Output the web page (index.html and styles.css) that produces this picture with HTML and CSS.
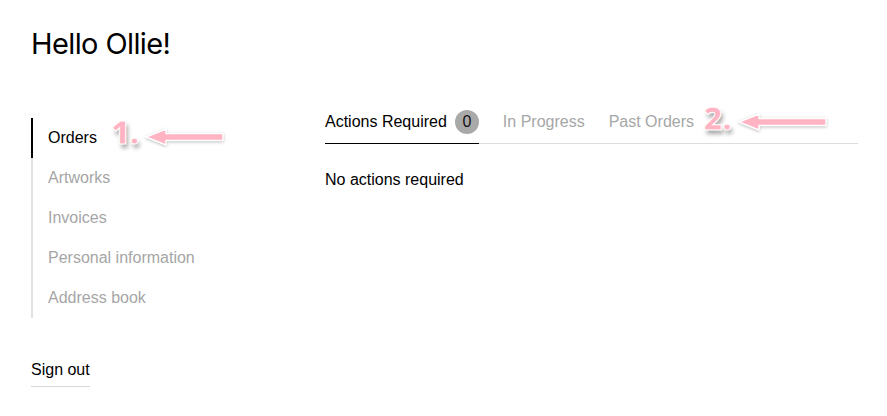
FILE: index.html
```html
<!DOCTYPE html>
<html>
<head>
<meta charset="utf-8">
<link rel="stylesheet" href="styles.css">
</head>
<body>
<div class="page">
  <h1 class="title">Hello Ollie!</h1>
  <div class="main">
    <aside class="side">
      <ul class="nav">
        <li class="nav-item active">Orders<span class="note note-1">1.</span>
          <svg class="arrow arrow-1" width="82" height="20" viewBox="0 0 82 20"><path d="M2 10 L22 2 L22 6.5 L79 6.5 L79 13.5 L22 13.5 L22 18 Z" fill="#ffb3c3" stroke="#fff" stroke-width="1.5" stroke-linejoin="round"/></svg>
        </li>
        <li class="nav-item">Artworks</li>
        <li class="nav-item">Invoices</li>
        <li class="nav-item">Personal information</li>
        <li class="nav-item">Address book</li>
      </ul>
      <div class="signout">Sign out</div>
    </aside>
    <section class="content">
      <div class="tabs">
        <div class="tab active">Actions Required <span class="badge">0</span></div>
        <div class="tab">In Progress</div>
        <div class="tab">Past Orders<span class="note note-2">2.</span>
          <svg class="arrow arrow-2" width="92" height="20" viewBox="0 0 92 20"><path d="M2 10 L22 2 L22 6.5 L89 6.5 L89 13.5 L22 13.5 L22 18 Z" fill="#ffb3c3" stroke="#fff" stroke-width="1.5" stroke-linejoin="round"/></svg>
        </div>
      </div>
      <p class="empty">No actions required</p>
    </section>
  </div>
</div>
</body>
</html>
```

FILE: styles.css
```css
* { box-sizing: border-box; }
html, body { margin: 0; padding: 0; background: #fff; }
body {
  font-family: "Liberation Sans", Arial, sans-serif;
  font-size: 16px;
  color: #111;
}
.page { padding: 26px 29px 0 31px; }
.title {
  margin: 0;
  font-family: Inter, "Liberation Sans", sans-serif;
  font-weight: 400;
  font-size: 29px;
  letter-spacing: -0.6px;
  line-height: 36px;
  color: #000;
}
.main {
  display: flex;
  margin-top: 56px;
}
.side { width: 294px; flex: none; }
.nav {
  list-style: none;
  margin: 0;
  padding: 0;
  border-left: 2px solid #e2e2e2;
}
.nav-item {
  position: relative;
  height: 40px;
  line-height: 40px;
  padding-left: 15px;
  margin-left: -2px;
  border-left: 2px solid transparent;
  color: #a6a6a6;
}
.nav-item.active { color: #000; border-left-color: #000; }
.signout {
  display: inline-block;
  margin-top: 41px;
  line-height: 22px;
  padding-bottom: 5px;
  border-bottom: 1px solid #d8d8d8;
  color: #000;
}
.content { flex: 1; margin-top: -8px; }
.tabs {
  display: flex;
  gap: 24px;
  border-bottom: 1px solid #ddd;
}
.tab {
  position: relative;
  display: flex;
  align-items: center;
  height: 34px;
  padding-bottom: 9px;
  margin-bottom: -1px;
  border-bottom: 1px solid transparent;
  color: #a6a6a6;
}
.tab.active { color: #000; border-bottom-color: #000; }
.badge {
  display: inline-flex;
  align-items: center;
  justify-content: center;
  width: 24px;
  height: 24px;
  margin-left: 8px;
  border-radius: 50%;
  background: #a9a9a9;
  color: #111;
  font-size: 16px;
}
.empty { margin: 26px 0 0; line-height: 20px; color: #000; }
.note {
  position: absolute;
  font-family: "Open Sans", "Liberation Sans", sans-serif;
  font-weight: 800;
  font-size: 32px;
  line-height: 32px;
  color: #ffb3c3;
  -webkit-text-stroke: 1px #fff;
  text-shadow: 2px 4px 4px rgba(0,0,0,0.35);
}
.note-1 { left: 78px; top: -2px; }
.note-2 { left: 95px; top: -8px; }
.arrow {
  position: absolute;
  filter: drop-shadow(0 1px 1.5px rgba(0,0,0,0.25));
}
.arrow-1 { left: 111px; top: 9px; }
.arrow-2 { left: 128px; top: 2px; }
```
